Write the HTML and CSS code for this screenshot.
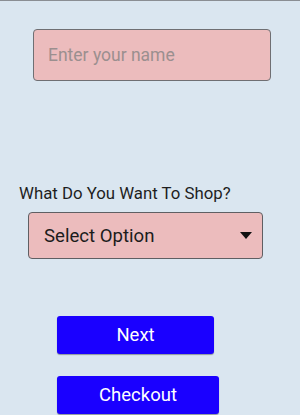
FILE: index.html
```html
<!DOCTYPE html>
<html lang="en">
<head>
  <meta charset="UTF-8">
  <meta name="viewport" content="width=device-width, initial-scale=1.0">
  <title>Shop</title>
  <link rel="stylesheet" href="styles.css">
</head>
<body>
  <div class="tela">
    <input type="text" class="campo-nome" placeholder="Enter your name">

    <label class="rotulo">What Do You Want To Shop?</label>
    <div class="seletor">
      <span>Select Option</span>
      <span class="seta"></span>
    </div>

    <button class="botao botao-next">Next</button>
    <button class="botao botao-checkout">Checkout</button>
  </div>
</body>
</html>
```

FILE: styles.css
```css
body {
  margin: 0;
  font-family: Roboto, "Noto Sans", sans-serif;
  background-color: #dae6f0;
  height: 415px;
  overflow: hidden;
}

.tela {
  border-top: 1px solid #8a8e93;
  display: flex;
  flex-direction: column;
  align-items: flex-start;
}

.campo-nome {
  box-sizing: border-box;
  width: 238px;
  height: 52px;
  margin: 28px 0 0 33px;
  padding: 0 14px;
  border: 1px solid #6f6f73;
  border-radius: 4px;
  background-color: #ecbcbd;
  font-family: Roboto, sans-serif;
  font-size: 17.5px;
  color: #333;
  outline: none;
}

.campo-nome::placeholder {
  color: #9b8f8f;
}

.rotulo {
  margin: 102px 0 0 19px;
  font-size: 16.8px;
  color: #1e1e1e;
}

.seletor {
  box-sizing: border-box;
  width: 235px;
  height: 47px;
  margin: 9px 0 0 28px;
  padding: 0 10px 0 15px;
  border: 1px solid #5f5f63;
  border-radius: 4px;
  background-color: #ecbcbd;
  display: flex;
  align-items: center;
  justify-content: space-between;
  font-size: 18.6px;
  color: #1c1c1c;
}

.seta {
  width: 0;
  height: 0;
  border-left: 6px solid transparent;
  border-right: 6px solid transparent;
  border-top: 7px solid #111;
}

.botao {
  box-sizing: border-box;
  height: 38px;
  margin-left: 57px;
  border: none;
  border-radius: 3px;
  background-color: #1a00ff;
  color: #fff;
  font-family: Roboto, sans-serif;
  font-size: 18.5px;
  box-shadow: 0 1px 1px rgba(0, 0, 0, 0.35);
}

.botao-next {
  width: 157px;
  margin-top: 57px;
}

.botao-checkout {
  width: 162px;
  margin-top: 22px;
}
```
